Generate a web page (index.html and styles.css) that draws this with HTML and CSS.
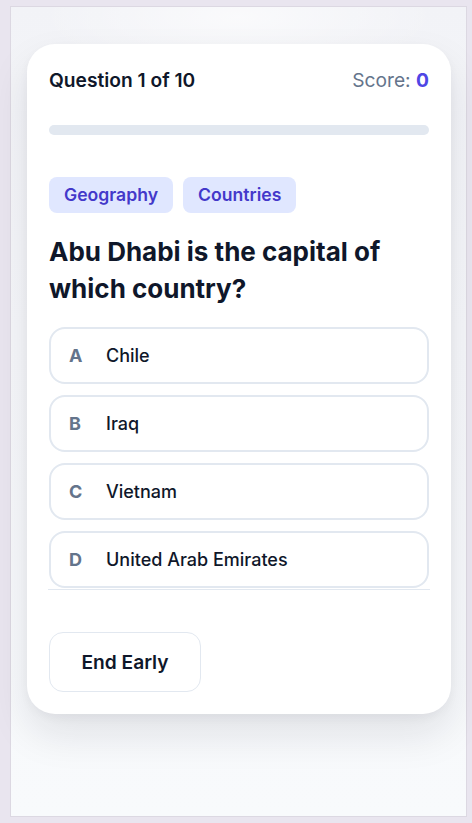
FILE: index.html
```html
<!DOCTYPE html>
<html lang="en">
<head>
    <meta charset="UTF-8">
    <meta name="viewport" content="width=device-width, initial-scale=1.0">
    <title>Quiz</title>
    <link rel="stylesheet" href="styles.css">
</head>
<body>
    <div class="frame">
        <div class="card">
            <div class="top">
                <div class="counter">Question 1 of 10</div>
                <div class="score">Score: <b>0</b></div>
            </div>
            <div class="progress"><div class="fill"></div></div>

            <div class="tags">
                <span class="tag">Geography</span>
                <span class="tag">Countries</span>
            </div>

            <h1 class="question">Abu Dhabi is the capital of which country?</h1>

            <div class="options">
                <button class="option"><span class="letter">A</span>Chile</button>
                <button class="option"><span class="letter">B</span>Iraq</button>
                <button class="option"><span class="letter">C</span>Vietnam</button>
                <button class="option"><span class="letter">D</span>United Arab Emirates</button>
            </div>

            <div class="actions">
                <button class="end">End Early</button>
            </div>
        </div>
    </div>
</body>
</html>
```

FILE: styles.css
```css
/* page and outer frame */
body {
    margin: 0;
    padding: 6px 5px 6px 10px;
    background: #e9e5ef;
    font-family: Inter, "Noto Sans", sans-serif;
    color: #0f172a;
}

.frame {
    box-sizing: border-box;
    height: 811px;
    border: 1px solid #dcd8e2;
    background:
        radial-gradient(ellipse 200px 60px at 50% 10px, rgba(255, 255, 255, 0.6), rgba(255, 255, 255, 0)),
        linear-gradient(180deg, #f2f3f7 0%, #f6f7fa 40%, #f8fafc 100%);
    padding: 37px 15px 0 16px;
}

/* the quiz card */
.card {
    background: #fff;
    border-radius: 28px;
    padding: 22px;
    box-shadow: 0 20px 40px rgba(15, 23, 42, 0.10), 0 4px 10px rgba(15, 23, 42, 0.04);
}

.top {
    display: flex;
    justify-content: space-between;
    align-items: center;
    height: 28px;
}

.counter {
    font-size: 19.2px;
    font-weight: 600;
}

.score {
    font-size: 19.2px;
    color: #64748b;
}

.score b {
    color: #4f46e5;
    font-weight: 700;
}

.progress {
    margin-top: 31px;
    height: 10px;
    border-radius: 5px;
    background: #e2e8f0;
}

.fill {
    width: 0;
    height: 100%;
}

/* tags */
.tags {
    display: flex;
    gap: 10px;
    margin-top: 42px;
}

.tag {
    background: #e0e7ff;
    color: #4338ca;
    font-size: 17.6px;
    font-weight: 600;
    height: 36px;
    line-height: 35px;
    padding: 0 15px;
    border-radius: 8px;
}

.question {
    margin: 20px 0 20px;
    font-size: 26px;
    font-weight: 700;
    line-height: 37px;
}

/* answers */
.options {
    display: flex;
    flex-direction: column;
    gap: 11px;
    margin: 0 -1px;
    padding: 0 1px 1px;
    border-bottom: 1px solid #e2e8f0;
}

.option {
    display: flex;
    align-items: center;
    height: 57px;
    padding: 0 18px;
    border: 2px solid #e2e8f0;
    border-radius: 16px;
    background: #fff;
    font-family: inherit;
    font-size: 18px;
    font-weight: 500;
    color: #0f172a;
    text-align: left;
}

.letter {
    width: 37px;
    font-weight: 700;
    color: #64748b;
}

/* bottom button */
.actions {
    margin-top: 42px;
}

.end {
    width: 152px;
    height: 60px;
    border: 1px solid #e2e8f0;
    border-radius: 14px;
    background: #fff;
    font-family: inherit;
    font-size: 19.2px;
    font-weight: 600;
    color: #0f172a;
}
```
